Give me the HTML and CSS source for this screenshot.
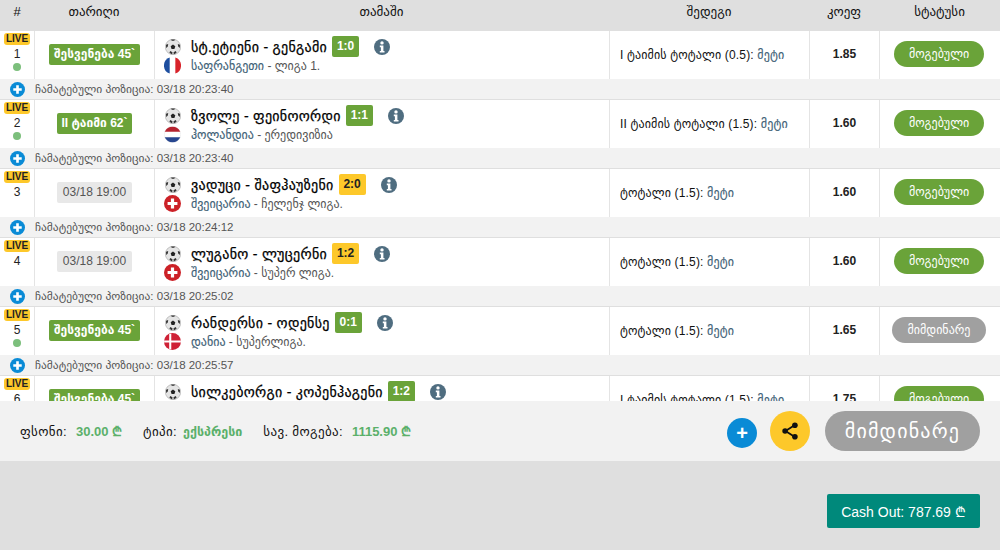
FILE: index.html
```html
<!DOCTYPE html>
<html lang="ka">
<head>
    <meta charset="UTF-8">
    <title>ბილეთი</title>
    <link rel="stylesheet" href="styles.css">
</head>
<body>
    <svg class="defs" width="0" height="0">
        <symbol id="ball" viewBox="0 0 16 16">
            <circle cx="8" cy="8" r="7.7" fill="#e4e4e4" stroke="#999" stroke-width=".5"/>
            <path d="M8 5.6l2.3 1.7-.9 2.7H6.6l-.9-2.7z" fill="#222"/>
            <path d="M5.6 1.1l2.4.9 2.4-.9L9.4.4H6.6zM1 5.8l.2 3.2 1.6-1.5.4-2.4zM15 5.8l-.2 3.2-1.6-1.5-.4-2.4zM4.4 13.8l2.8 1.6.3-2.2-2.3-1.3zM11.6 13.8l-2.8 1.6-.3-2.2 2.3-1.3z" fill="#333"/>
        </symbol>
        <symbol id="info" viewBox="0 0 16 16">
            <circle cx="8" cy="8" r="8" fill="#4f6d80"/>
            <circle cx="8" cy="3.9" r="1.7" fill="#fff"/>
            <path d="M5.8 6.6h3.6v5.3h1.1v1.7H5.8v-1.7h1.1V8.3H5.8z" fill="#fff"/>
        </symbol>
        <symbol id="plus" viewBox="0 0 16 16">
            <circle cx="8" cy="8" r="8" fill="#0a8bd6"/>
            <path d="M6.6 3.5h2.8v3.1h3.1v2.8H9.4v3.1H6.6V9.4H3.5V6.6h3.1z" fill="#fff"/>
        </symbol>
        <symbol id="fr" viewBox="0 0 18 18">
            <circle cx="9" cy="9" r="9" fill="#fff"/>
            <path d="M6 .5a9 9 0 0 0 0 17z" fill="#1d4e9f"/>
            <path d="M12 .5a9 9 0 0 1 0 17z" fill="#d8232a"/>
        </symbol>
        <symbol id="nl" viewBox="0 0 18 18">
            <circle cx="9" cy="9" r="8.7" fill="#fff" stroke="#e4e4e4" stroke-width=".5"/>
            <path d="M.8 6a9 9 0 0 1 16.4 0z" fill="#b5232f"/>
            <path d="M.8 12a9 9 0 0 0 16.4 0z" fill="#27468f"/>
        </symbol>
        <symbol id="ch" viewBox="0 0 18 18">
            <circle cx="9" cy="9" r="9" fill="#cc2127"/>
            <path d="M7.3 3.8h3.4v3.5h3.5v3.4h-3.5v3.5H7.3v-3.5H3.8V7.3h3.5z" fill="#fff"/>
        </symbol>
        <symbol id="dk" viewBox="0 0 18 18">
            <circle cx="9" cy="9" r="9" fill="#cf2136"/>
            <path d="M5.5.8h2.2v7.1h10.2v2.2H7.7v7.1H5.5v-7.1H.1V7.9h5.4z" fill="#fff"/>
        </symbol>
    </svg>

    <div class="ticket">
        <div class="row head">
            <div class="c-num">#</div>
            <div class="c-date">თარიღი</div>
            <div class="c-match">თამაში</div>
            <div class="c-result">შედეგი</div>
            <div class="c-coef">კოეფ</div>
            <div class="c-status">სტატუსი</div>
        </div>

        <div class="list">
            <div class="row item">
                <div class="c-num"><span class="live">LIVE</span><span class="num">1</span><i class="dot"></i></div>
                <div class="c-date"><span class="time on">შესვენება 45`</span></div>
                <div class="c-match">
                    <div class="line"><svg class="ball"><use href="#ball"/></svg><b class="teams">სტ.ეტიენი - გენგამი</b><span class="score">1:0</span><svg class="info"><use href="#info"/></svg></div>
                    <div class="line sub"><svg class="flag"><use href="#fr"/></svg><span><a>საფრანგეთი</a> - ლიგა 1.</span></div>
                </div>
                <div class="c-result">I ტაიმის ტოტალი (0.5): <a>მეტი</a></div>
                <div class="c-coef">1.85</div>
                <div class="c-status"><span class="pill">მოგებული</span></div>
            </div>
            <div class="added"><svg class="plus"><use href="#plus"/></svg>ჩამატებული პოზიცია: 03/18 20:23:40</div>

            <div class="row item">
                <div class="c-num"><span class="live">LIVE</span><span class="num">2</span><i class="dot"></i></div>
                <div class="c-date"><span class="time on">II ტაიმი 62`</span></div>
                <div class="c-match">
                    <div class="line"><svg class="ball"><use href="#ball"/></svg><b class="teams">ზვოლე - ფეინოორდი</b><span class="score">1:1</span><svg class="info"><use href="#info"/></svg></div>
                    <div class="line sub"><svg class="flag"><use href="#nl"/></svg><span><a>ჰოლანდია</a> - ერედივიზია</span></div>
                </div>
                <div class="c-result">II ტაიმის ტოტალი (1.5): <a>მეტი</a></div>
                <div class="c-coef">1.60</div>
                <div class="c-status"><span class="pill">მოგებული</span></div>
            </div>
            <div class="added"><svg class="plus"><use href="#plus"/></svg>ჩამატებული პოზიცია: 03/18 20:23:40</div>

            <div class="row item">
                <div class="c-num"><span class="live">LIVE</span><span class="num">3</span></div>
                <div class="c-date"><span class="time">03/18 19:00</span></div>
                <div class="c-match">
                    <div class="line"><svg class="ball"><use href="#ball"/></svg><b class="teams">ვადუცი - შაფჰაუზენი</b><span class="score wait">2:0</span><svg class="info"><use href="#info"/></svg></div>
                    <div class="line sub"><svg class="flag"><use href="#ch"/></svg><span><a>შვეიცარია</a> - ჩელენჯ ლიგა.</span></div>
                </div>
                <div class="c-result">ტოტალი (1.5): <a>მეტი</a></div>
                <div class="c-coef">1.60</div>
                <div class="c-status"><span class="pill">მოგებული</span></div>
            </div>
            <div class="added"><svg class="plus"><use href="#plus"/></svg>ჩამატებული პოზიცია: 03/18 20:24:12</div>

            <div class="row item">
                <div class="c-num"><span class="live">LIVE</span><span class="num">4</span></div>
                <div class="c-date"><span class="time">03/18 19:00</span></div>
                <div class="c-match">
                    <div class="line"><svg class="ball"><use href="#ball"/></svg><b class="teams">ლუგანო - ლუცერნი</b><span class="score wait">1:2</span><svg class="info"><use href="#info"/></svg></div>
                    <div class="line sub"><svg class="flag"><use href="#ch"/></svg><span><a>შვეიცარია</a> - სუპერ ლიგა.</span></div>
                </div>
                <div class="c-result">ტოტალი (1.5): <a>მეტი</a></div>
                <div class="c-coef">1.60</div>
                <div class="c-status"><span class="pill">მოგებული</span></div>
            </div>
            <div class="added"><svg class="plus"><use href="#plus"/></svg>ჩამატებული პოზიცია: 03/18 20:25:02</div>

            <div class="row item">
                <div class="c-num"><span class="live">LIVE</span><span class="num">5</span><i class="dot"></i></div>
                <div class="c-date"><span class="time on">შესვენება 45`</span></div>
                <div class="c-match">
                    <div class="line"><svg class="ball"><use href="#ball"/></svg><b class="teams">რანდერსი - ოდენსე</b><span class="score">0:1</span><svg class="info"><use href="#info"/></svg></div>
                    <div class="line sub"><svg class="flag"><use href="#dk"/></svg><span><a>დანია</a> - სუპერლიგა.</span></div>
                </div>
                <div class="c-result">ტოტალი (1.5): <a>მეტი</a></div>
                <div class="c-coef">1.65</div>
                <div class="c-status"><span class="pill going">მიმდინარე</span></div>
            </div>
            <div class="added"><svg class="plus"><use href="#plus"/></svg>ჩამატებული პოზიცია: 03/18 20:25:57</div>

            <div class="row item">
                <div class="c-num"><span class="live">LIVE</span><span class="num">6</span><i class="dot"></i></div>
                <div class="c-date"><span class="time on">შესვენება 45`</span></div>
                <div class="c-match">
                    <div class="line"><svg class="ball"><use href="#ball"/></svg><b class="teams">სილკებორგი - კოპენჰაგენი</b><span class="score">1:2</span><svg class="info"><use href="#info"/></svg></div>
                </div>
                <div class="c-result">I ტაიმის ტოტალი (1.5): <a>მეტი</a></div>
                <div class="c-coef">1.75</div>
                <div class="c-status"><span class="pill">მოგებული</span></div>
            </div>
        </div>

        <div class="summary">
            <span class="stat">ფსონი: <em>30.00 ₾</em></span>
            <span class="stat">ტიპი: <em class="word">ექსპრესი</em></span>
            <span class="stat">სავ. მოგება: <em>1115.90 ₾</em></span>
            <div class="actions">
                <button class="round add">+</button>
                <button class="round share">
                    <svg width="16" height="18" viewBox="0 0 16 18"><path d="M12.5 3.2 3.5 9l9 5.8" fill="none" stroke="#111" stroke-width="1.8"/><circle cx="12.9" cy="3.2" r="2.8" fill="#111"/><circle cx="3.1" cy="9" r="2.8" fill="#111"/><circle cx="12.9" cy="14.8" r="2.8" fill="#111"/></svg>
                </button>
                <button class="state">მიმდინარე</button>
            </div>
        </div>

        <div class="bottom">
            <button class="cashout">Cash Out: 787.69 ₾</button>
        </div>
    </div>
</body>
</html>
```

FILE: styles.css
```css
body {
    margin: 0;
    background-color: #dfdfdf;
    color: #222;
    font-family: "Liberation Sans", "DejaVu Sans", sans-serif;
    font-size: 12px;
}
.defs {
    display: block;
    height: 0;
}
.row {
    display: flex;
}
.row > div {
    flex: none;
    box-sizing: border-box;
}
.c-num { width: 34px; }
.c-date { width: 120px; }
.c-match { width: 455px; }
.c-result { width: 200px; }
.c-coef { width: 70px; }
.c-status { width: 121px; }

.head {
    height: 31px;
    background: #dfdfdf;
    color: #111;
    font-size: 13px;
    line-height: 23px;
    text-align: center;
}
.list {
    height: 370px;
    overflow: hidden;
}
.item {
    height: 48px;
    background: #fff;
}
.item > div {
    border-left: 1px solid #e4e4e4;
}
.item > .c-num {
    border-left: 0;
    display: flex;
    flex-direction: column;
    align-items: center;
    padding-top: 2px;
}
.live {
    background: #fdc82a;
    border-radius: 3px;
    font-size: 10px;
    font-weight: bold;
    line-height: 12px;
    padding: 0 2px;
}
.num {
    margin-top: 2px;
    line-height: 15px;
}
.dot {
    width: 8px;
    height: 8px;
    margin-top: 1px;
    border-radius: 50%;
    background: #7cbf7c;
}
.item > .c-date {
    display: flex;
    align-items: center;
    justify-content: center;
}
.time {
    margin-bottom: 2px;
    background: #e8e8e8;
    color: #555;
    border-radius: 2px;
    padding: 0 6px;
    line-height: 21px;
}
.time.on {
    background: #6aa339;
    color: #fff;
    font-weight: bold;
    padding: 0 4.5px;
}
.item > .c-match {
    padding: 5px 0 0 9px;
}
.line {
    display: flex;
    align-items: center;
    height: 21px;
}
.line.sub {
    height: 17px;
    color: #555;
}
.ball {
    width: 16px;
    height: 16px;
    margin: 0 10px 0 1px;
    flex: none;
}
.flag {
    width: 17px;
    height: 17px;
    margin-right: 10px;
    flex: none;
}
.teams {
    font-size: 14px;
    font-weight: normal;
    letter-spacing: .3px;
    color: #000;
    -webkit-text-stroke: .25px #000;
}
.score {
    width: 27px;
    background: #6aa339;
    color: #fff;
    font-weight: bold;
    text-align: center;
    border-radius: 2px;
    line-height: 21px;
    margin-left: 5px;
}
.score.wait {
    background: #fdc82a;
    color: #222;
}
.info {
    width: 16px;
    height: 16px;
    margin-left: 15px;
}
a {
    color: #3f6277;
    -webkit-text-stroke: .15px #3f6277;
}
.item > .c-result {
    padding-left: 10px;
    line-height: 49px;
    letter-spacing: .15px;
    color: #111;
}
.item > .c-coef {
    text-align: center;
    font-weight: bold;
    line-height: 47px;
}
.item > .c-status {
    padding-left: 14px;
    padding-top: 10px;
}
.pill {
    display: block;
    width: 90px;
    height: 26px;
    border-radius: 13px;
    background: #6aa339;
    color: #fff;
    text-align: center;
    line-height: 26px;
}
.pill.going {
    width: 94px;
    margin-left: -2px;
    background: #a0a0a0;
}
.added {
    display: flex;
    align-items: center;
    height: 20px;
    margin-bottom: 1px;
    background: #f2f2f2;
    color: #555;
    font-size: 11.5px;
}
.plus {
    width: 15px;
    height: 15px;
    margin: 0 10px;
}
.summary {
    display: flex;
    align-items: center;
    gap: 21px;
    height: 60px;
    padding: 0 20px;
    background: #f2f2f2;
    font-size: 13px;
    letter-spacing: .35px;
    color: #111;
}
.stat em {
    font-style: normal;
    font-weight: bold;
    letter-spacing: 0;
    color: #5bb06a;
    margin-left: 5px;
}
.stat em.word {
    margin-left: 2px;
    font-size: 12.5px;
}
.actions {
    display: flex;
    align-items: center;
    margin-left: auto;
}
button {
    border: 0;
    padding: 0;
    font-family: inherit;
}
.round {
    display: flex;
    align-items: center;
    justify-content: center;
    border-radius: 50%;
}
.add {
    width: 30px;
    height: 30px;
    margin-top: 4px;
    background: #0a8bd6;
    color: #fff;
    font-size: 20px;
    font-weight: bold;
}
.share {
    width: 40px;
    height: 40px;
    margin-left: 13px;
    background: #fdc82a;
}
.state {
    width: 155px;
    height: 40px;
    margin-left: 15px;
    border-radius: 20px;
    background: #a0a0a0;
    color: #fff;
    font-size: 20px;
    letter-spacing: 1.2px;
}
.bottom {
    display: flex;
    justify-content: flex-end;
    padding: 33px 20px 0;
}
.cashout {
    width: 153px;
    height: 34px;
    border-radius: 2px;
    background: #00897b;
    color: #fff;
    font-size: 14px;
}
```
